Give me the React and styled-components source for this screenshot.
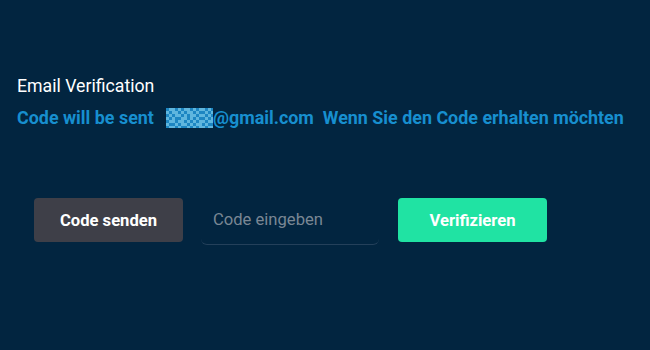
import React from 'react';
import styled, { createGlobalStyle } from 'styled-components';

const GlobalStyle = createGlobalStyle`
  html, body {
    margin: 0;
    padding: 0;
    background: #022540;
  }
  body {
    font-family: Roboto, "Liberation Sans", Arial, sans-serif;
  }
`;

const Page = styled.div`
  width: 650px;
  height: 350px;
  background: #022540;
  padding: 75px 0 0 17px;
  box-sizing: border-box;
`;

const Title = styled.div`
  color: #ffffff;
  font-size: 17.7px;
  line-height: 22px;
  font-weight: 400;
`;

const Notice = styled.div`
  display: flex;
  align-items: center;
  margin-top: 10px;
  color: #178fcf;
  font-size: 17.9px;
  font-weight: 700;
  line-height: 22px;
  white-space: nowrap;
`;

const Gap = styled.span`
  display: inline-block;
  width: ${(p) => p.w}px;
`;

const Mosaic = styled.svg`
  display: block;
  width: 47px;
  height: 20px;
`;

const Row = styled.div`
  display: flex;
  align-items: flex-start;
  margin-top: 69px;
  padding-left: 17px;
`;

const Button = styled.button`
  width: 149px;
  height: 44px;
  border: none;
  border-radius: 4px;
  background: ${(p) => p.bg};
  color: #ffffff;
  font-family: Roboto, "Liberation Sans", Arial, sans-serif;
  font-size: 16.6px;
  font-weight: 700;
  padding: 0;
`;

const Input = styled.input`
  width: 178px;
  height: 47px;
  margin: 0 19px 0 18px;
  box-sizing: border-box;
  border: none;
  border-bottom: 1px solid #24405a;
  border-radius: 6px;
  background: transparent;
  padding: 0 0 3px 12px;
  color: #ffffff;
  font-family: Roboto, "Liberation Sans", Arial, sans-serif;
  font-size: 16.6px;
  outline: none;
  &::placeholder {
    color: #7a8794;
  }
`;

const cells = [
  '0110101101011010',
  '1011010110100101',
  '0101101011011010',
  '1010011010100101',
  '0110110101011011',
  '1001011010110100',
  '0110100101011011',
];

function EmailMosaic() {
  const rects = [];
  cells.forEach((row, y) => {
    row.split('').forEach((c, x) => {
      rects.push(
        <rect
          key={`${x}-${y}`}
          x={x * 3}
          y={y * 3}
          width="3"
          height="3"
          fill={c === '1' ? '#5fb6de' : '#1d86c2'}
        />
      );
    });
  });
  return (
    <Mosaic viewBox="0 0 47 20">
      <rect width="47" height="20" fill="#2a95cc" />
      {rects}
    </Mosaic>
  );
}

export default function App() {
  return (
    <Page>
      <GlobalStyle />
      <Title>Email Verification</Title>
      <Notice>
        Code will be sent
        <Gap w={12} />
        <EmailMosaic />
        @gmail.com
        <Gap w={9} />
        Wenn Sie den Code erhalten möchten
      </Notice>
      <Row>
        <Button bg="#3e3f48">Code senden</Button>
        <Input placeholder="Code eingeben" />
        <Button bg="#20e3a3">Verifizieren</Button>
      </Row>
    </Page>
  );
}
